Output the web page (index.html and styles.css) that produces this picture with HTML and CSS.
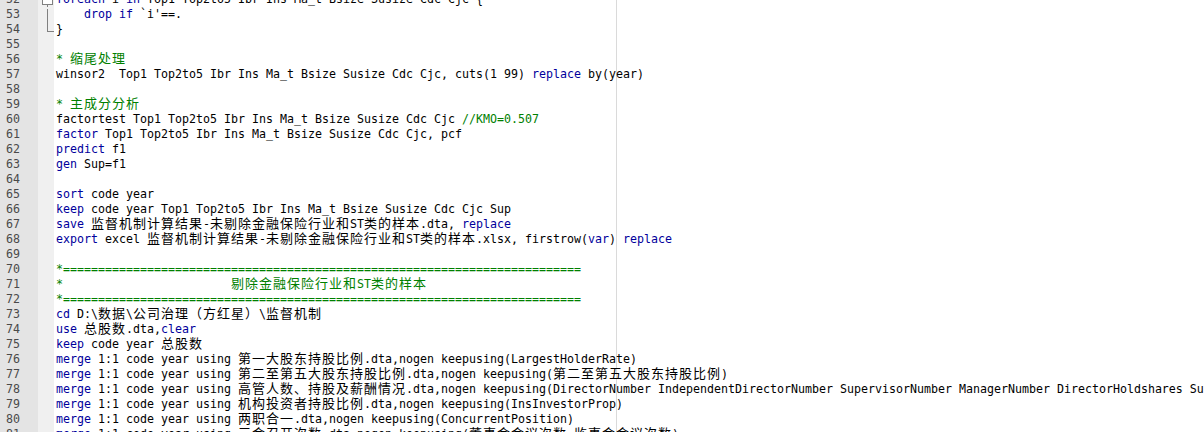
FILE: index.html
```html
<!DOCTYPE html>
<html lang="zh-CN">
<head>
  <meta charset="UTF-8">
  <title>dofile - 监督机制</title>
  <link rel="stylesheet" href="styles.css">
</head>
<body>
  <div class="editor">
    <div class="view">
      <div class="gutter">
        <div class="row">52</div>
        <div class="row">53</div>
        <div class="row">54</div>
        <div class="row">55</div>
        <div class="row">56</div>
        <div class="row">57</div>
        <div class="row">58</div>
        <div class="row">59</div>
        <div class="row">60</div>
        <div class="row">61</div>
        <div class="row">62</div>
        <div class="row">63</div>
        <div class="row">64</div>
        <div class="row">65</div>
        <div class="row">66</div>
        <div class="row">67</div>
        <div class="row">68</div>
        <div class="row">69</div>
        <div class="row">70</div>
        <div class="row">71</div>
        <div class="row">72</div>
        <div class="row">73</div>
        <div class="row">74</div>
        <div class="row">75</div>
        <div class="row">76</div>
        <div class="row">77</div>
        <div class="row">78</div>
        <div class="row">79</div>
        <div class="row">80</div>
        <div class="row">81</div>
      </div>

      <div class="folds">
        <div class="row"><div class="fold-box"></div><div class="fold-stem"></div></div>
        <div class="row"><div class="fold-mid"></div></div>
        <div class="row"><div class="fold-end"></div></div>
      </div>

      <div class="code">
        <div class="row"><span class="k">foreach</span> i <span class="k">in</span> Top1 Top2to5 Ibr Ins Ma_t Bsize Susize Cdc Cjc {</div>
        <div class="row">    <span class="k">drop</span> <span class="k">if</span> `i'==.</div>
        <div class="row">}</div>
        <div class="row"></div>
        <div class="row cm">* <span class="c">缩尾处理</span></div>
        <div class="row">winsor2  Top1 Top2to5 Ibr Ins Ma_t Bsize Susize Cdc Cjc, cuts(1 99) <span class="k">replace</span> by(year)</div>
        <div class="row"></div>
        <div class="row cm">* <span class="c">主成分分析</span></div>
        <div class="row">factortest Top1 Top2to5 Ibr Ins Ma_t Bsize Susize Cdc Cjc <span class="cm">//KMO=0.507</span></div>
        <div class="row"><span class="k">factor</span> Top1 Top2to5 Ibr Ins Ma_t Bsize Susize Cdc Cjc, pcf</div>
        <div class="row"><span class="k">predict</span> f1</div>
        <div class="row"><span class="k">gen</span> Sup=f1</div>
        <div class="row"></div>
        <div class="row"><span class="k">sort</span> code year</div>
        <div class="row"><span class="k">keep</span> code year Top1 Top2to5 Ibr Ins Ma_t Bsize Susize Cdc Cjc Sup</div>
        <div class="row"><span class="k">save</span> <span class="c">监督机制计算结果</span>-<span class="c">未剔除金融保险行业和</span>ST<span class="c">类的样本</span>.dta, <span class="k">replace</span></div>
        <div class="row"><span class="k">export</span> excel <span class="c">监督机制计算结果</span>-<span class="c">未剔除金融保险行业和</span>ST<span class="c">类的样本</span>.xlsx, firstrow(<span class="k">var</span>) <span class="k">replace</span></div>
        <div class="row"></div>
        <div class="row cm">*==========================================================================</div>
        <div class="row cm">*                        <span class="c">剔除金融保险行业和</span>ST<span class="c">类的样本</span></div>
        <div class="row cm">*==========================================================================</div>
        <div class="row"><span class="k">cd</span> D:\<span class="c">数据</span>\<span class="c">公司治理（方红星）</span>\<span class="c">监督机制</span></div>
        <div class="row"><span class="k">use</span> <span class="c">总股数</span>.dta,<span class="k">clear</span></div>
        <div class="row"><span class="k">keep</span> code year <span class="c">总股数</span></div>
        <div class="row"><span class="k">merge</span> 1:1 code year using <span class="c">第一大股东持股比例</span>.dta,nogen keepusing(LargestHolderRate)</div>
        <div class="row"><span class="k">merge</span> 1:1 code year using <span class="c">第二至第五大股东持股比例</span>.dta,nogen keepusing(<span class="c">第二至第五大股东持股比例</span>)</div>
        <div class="row"><span class="k">merge</span> 1:1 code year using <span class="c">高管人数、持股及薪酬情况</span>.dta,nogen keepusing(DirectorNumber IndependentDirectorNumber SupervisorNumber ManagerNumber DirectorHoldshares SupervisorHoldshares ManagerHoldshares)</div>
        <div class="row"><span class="k">merge</span> 1:1 code year using <span class="c">机构投资者持股比例</span>.dta,nogen keepusing(InsInvestorProp)</div>
        <div class="row"><span class="k">merge</span> 1:1 code year using <span class="c">两职合一</span>.dta,nogen keepusing(ConcurrentPosition)</div>
        <div class="row"><span class="k">merge</span> 1:1 code year using <span class="c">三会召开次数</span>.dta,nogen keepusing(<span class="c">董事会会议次数</span> <span class="c">监事会会议次数</span>)</div>
      </div>
    </div>
  </div>
</body>
</html>
```

FILE: styles.css
```css
body {
  margin: 0;
  background-color: #fff;
}

.editor {
  height: 432px;
  overflow: hidden;
  font-family: "DejaVu Sans Mono", monospace;
  font-size: 11.63px;
  line-height: 15px;
  color: #000;
}

/* scrolled so that line 52 is half hidden */
.view {
  display: flex;
  margin-top: -8px;
}

.row {
  height: 15px;
}

.gutter {
  flex: none;
  width: 38px;
  padding-right: 18px;
  box-sizing: border-box;
  background-color: #e4e4e4;
  color: #4a4a4a;
  text-align: right;
}

.folds {
  flex: none;
  width: 16px;
  background-color: #f0f0f0;
}

.fold-box {
  width: 9px;
  height: 9px;
  margin: 2px 0 0 4px;
  border: 1px solid #808080;
  background-color: #fff;
}

.fold-stem {
  width: 0;
  height: 2px;
  margin-left: 9px;
  border-left: 1px solid #808080;
}

.fold-mid {
  height: 15px;
  margin-left: 9px;
  border-left: 1px solid #808080;
}

.fold-end {
  width: 6px;
  height: 7px;
  margin-left: 9px;
  border-left: 1px solid #808080;
  border-bottom: 1px solid #808080;
}

.code {
  flex: 1;
  min-width: 0;
  padding-left: 2px;
  background: linear-gradient(90deg, transparent 562px, #dadada 562px, #dadada 563px, transparent 563px);
}

.code .row {
  white-space: pre;
}

.k {
  color: #00009c;
}

.cm {
  color: #008000;
}

.c {
  font-family: "Noto Sans CJK SC", sans-serif;
  font-size: 13px;
  letter-spacing: 1px;
  line-height: 0;
}
```
